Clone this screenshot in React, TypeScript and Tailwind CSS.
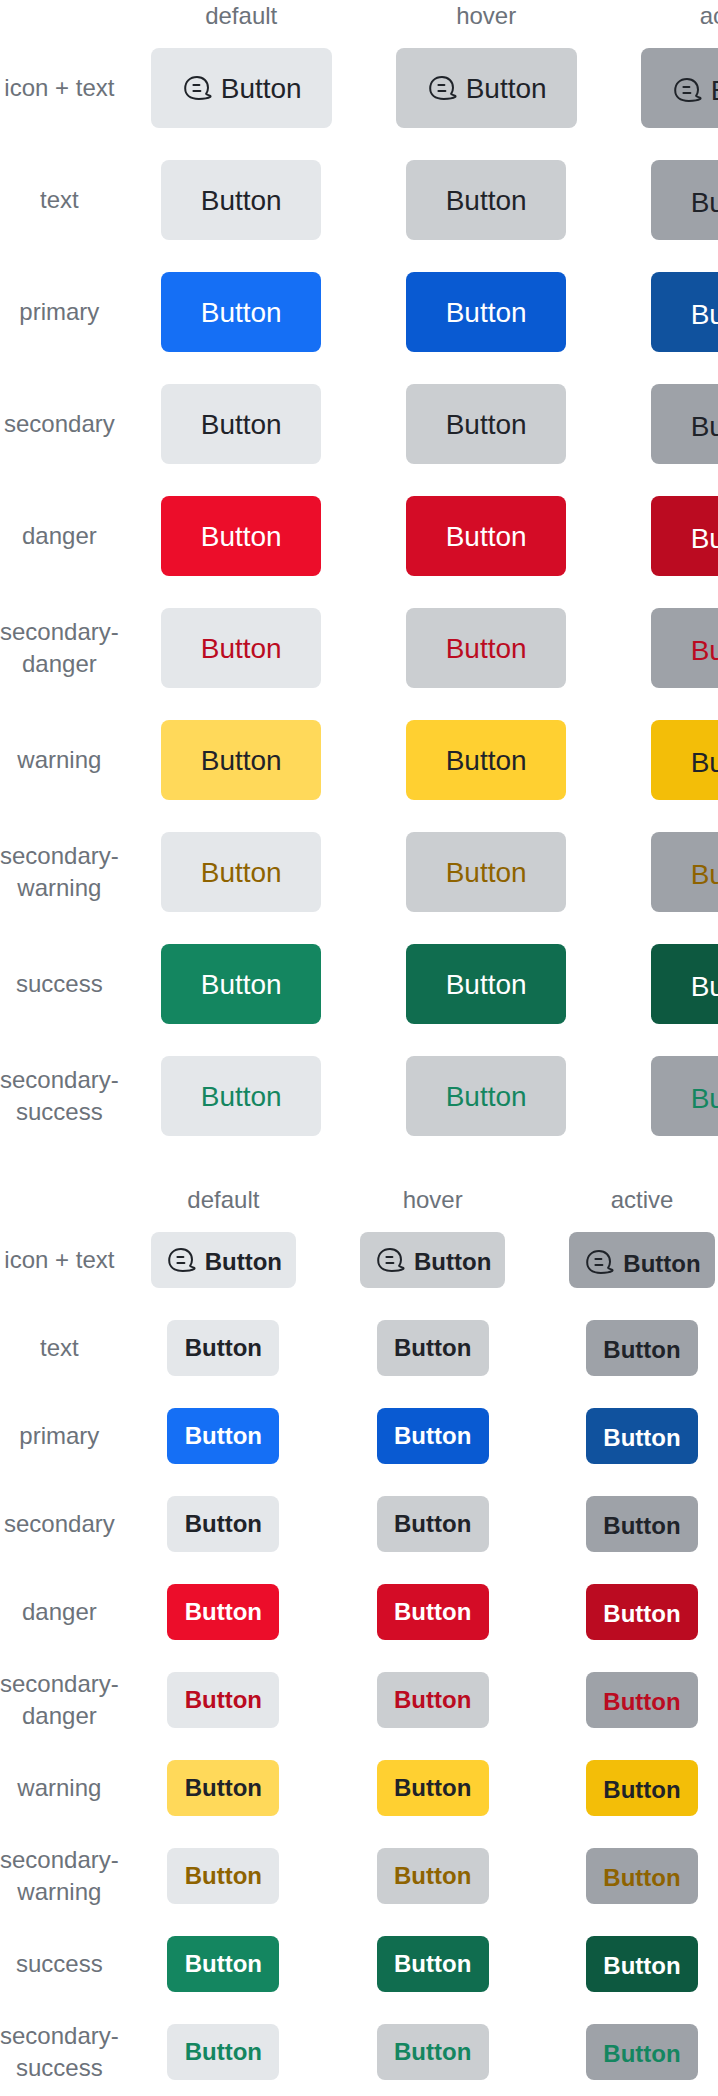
import React from 'react';
import clsx from 'clsx';

type Size = 'large' | 'small';

type Variant = {
  name: string;
  icon?: boolean;
  text: string;
  fills: [string, string, string];
};

const NEUTRAL: [string, string, string] = ['bg-[#e4e7ea]', 'bg-[#cbced1]', 'bg-[#9ea2a8]'];

const VARIANTS: Variant[] = [
  { name: 'icon + text', icon: true, text: 'text-[#1f2329]', fills: NEUTRAL },
  { name: 'text', text: 'text-[#1f2329]', fills: NEUTRAL },
  { name: 'primary', text: 'text-white', fills: ['bg-[#156ff5]', 'bg-[#095ad2]', 'bg-[#10529e]'] },
  { name: 'secondary', text: 'text-[#1f2329]', fills: NEUTRAL },
  { name: 'danger', text: 'text-white', fills: ['bg-[#ec0d2a]', 'bg-[#d40c26]', 'bg-[#bb0b21]'] },
  { name: 'secondary-danger', text: 'text-[#bb0b21]', fills: NEUTRAL },
  { name: 'warning', text: 'text-[#1f2329]', fills: ['bg-[#ffd95a]', 'bg-[#ffd031]', 'bg-[#f3be08]'] },
  { name: 'secondary-warning', text: 'text-[#8e6300]', fills: NEUTRAL },
  { name: 'success', text: 'text-white', fills: ['bg-[#148660]', 'bg-[#106d4f]', 'bg-[#0d5940]'] },
  { name: 'secondary-success', text: 'text-[#148660]', fills: NEUTRAL },
];

const STATES = ['default', 'hover', 'active'];

function BalloonIcon() {
  return (
    <svg
      viewBox="0.8 0 32 32"
      className="size-8 shrink-0"
      fill="none"
      stroke="currentColor"
      strokeWidth="2"
      strokeLinecap="round"
      strokeLinejoin="round"
      aria-hidden="true"
    >
      <path d="M25.9 21.8C27.2 20 27.8 18 27.8 15.8C27.8 9.4 23.2 5 16.8 5C9.8 5 5 9.6 5 16.3C5 22.6 9.6 26.9 18.6 26.9C23.6 26.9 28 26.2 30 24.9C30.6 24.4 30.4 23.9 29.7 23.6C28 23.1 26.5 22.6 25.9 21.8Z" />
      <path d="M13.2 13H19.2M13.2 18.9H20.2" />
    </svg>
  );
}

function DemoButton({ variant, size, state }: { variant: Variant; size: Size; state: number }) {
  const large = size === 'large';
  return (
    <button
      type="button"
      className={clsx(
        'mx-auto flex items-center justify-center gap-2 rounded-lg whitespace-nowrap',
        large ? 'h-20 text-[28px] leading-10' : 'h-14 text-2xl leading-8 font-bold',
        !variant.icon && (large ? 'w-40' : 'w-28'),
        variant.icon && (large ? 'w-max px-[30px]' : 'w-max px-[14px]'),
        state === 2 && 'pt-1',
        variant.text,
        variant.fills[state],
      )}
    >
      {variant.icon && <BalloonIcon />}
      <span className={clsx(large && 'pt-0.5', variant.icon && !large && 'pt-1')}>Button</span>
    </button>
  );
}

function ButtonTable({ size }: { size: Size }) {
  return (
    <table className="w-max border-collapse text-center text-2xl leading-8 text-[#6c727a]">
      <thead>
        <tr>
          <td className="w-px p-0" />
          {STATES.map((state) => (
            <th key={state} scope="col" className="p-0 text-center font-normal">
              {state}
            </th>
          ))}
        </tr>
      </thead>
      <tbody>
        {VARIANTS.map((variant) => (
          <tr key={variant.name}>
            <th
              scope="row"
              className={clsx(
                'w-px p-0 text-center align-middle font-normal',
                variant.icon && 'whitespace-nowrap',
              )}
            >
              {variant.name}
            </th>
            {STATES.map((state, index) => (
              <td key={state} className="px-8 py-4 align-middle">
                <DemoButton variant={variant} size={size} state={index} />
              </td>
            ))}
          </tr>
        ))}
      </tbody>
    </table>
  );
}

export default function App() {
  return (
    <main className="flex flex-col gap-8 overflow-hidden bg-white font-['Liberation_Sans',Arial,sans-serif]">
      <ButtonTable size="large" />
      <ButtonTable size="small" />
    </main>
  );
}
